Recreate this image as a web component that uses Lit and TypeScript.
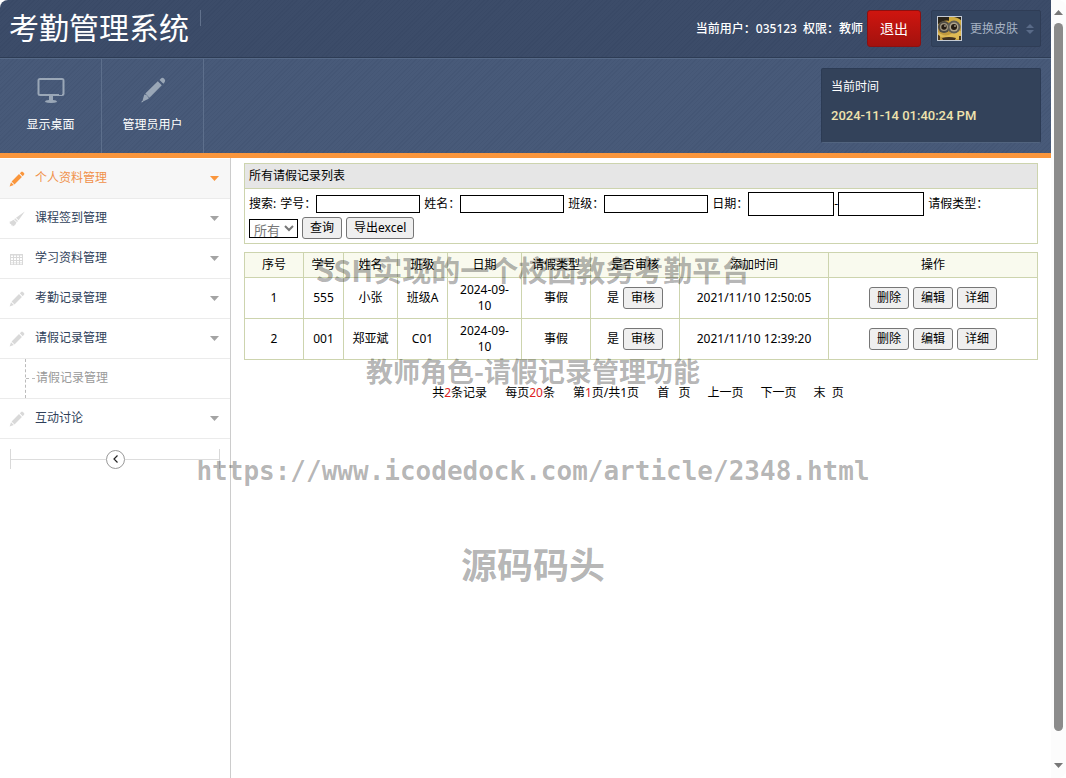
import { LitElement, html, css, svg, nothing } from "lit";
import { customElement, property, state } from "lit/decorators.js";
import { classMap } from "lit/directives/class-map.js";

type IconName = "pencil" | "brush" | "grid";

const icons = {
  pencil: svg`<path d="M10.8 2.3 12.2 .9Q13 .2 13.9 1L15 2.1Q15.8 3 15 3.8L13.700 5.2ZM2.600 10.500 10 3.100 12.900 6 5.500 13.400ZM2 11.200 4.800 14 .6 15.400Z"/>`,
  brush: svg`<path d="M15.800 .4 9.600 9.200 7 6.700ZM6.200 7.300 9 10.100 8 11.100 5.200 8.300ZM4.600 8.700 7.500 11.600Q6.400 15 3.800 15.600L3.500 14.300 2.300 14.400 2.200 13 .8 12.800 .9 11.300 0 11Q2 10.600 4.600 8.700Z"/>`,
  grid: svg`<path fill-rule="evenodd" d="M1 3H14V14H1ZM2 4.500V6H4V4.500ZM5 4.500V6H7V4.500ZM8 4.500V6H10V4.500ZM11 4.500V6H13V4.500ZM2 7V9H4V7ZM5 7V9H7V7ZM8 7V9H10V7ZM11 7V9H13V7ZM2 10V11.500H4V10ZM5 10V11.500H7V10ZM8 10V11.500H10V10ZM11 10V11.500H13V10ZM2 12.300V13.300H4V12.300ZM5 12.300V13.300H7V12.300ZM8 12.300V13.300H10V12.300ZM11 12.300V13.300H13V12.300Z"/>`,
};

const base = css`
  * {
    box-sizing: border-box;
  }
  a {
    color: inherit;
    text-decoration: none;
  }
  button,
  input,
  select {
    font: inherit;
    margin: 0;
  }
  svg {
    display: block;
    flex: none;
  }
`;

@customElement("app-header")
export class AppHeader extends LitElement {
  static styles = [
    base,
    css`
      :host {
        display: block;
        color: #fff;
        border-bottom: 5px solid #fa963c;
      }
      .top,
      .tools {
        display: flex;
        background-image: repeating-linear-gradient(
          135deg,
          rgba(20, 35, 65, 0.07) 0 1px,
          transparent 1px 3px
        );
      }
      .top {
        height: 58px;
        padding: 10px 10px 0 9px;
        background-color: #3c4c69;
        border-bottom: 1px solid #2d3c55;
        border-top-left-radius: 8px;
      }
      h1 {
        margin: 0;
        padding-right: 11px;
        font-size: 30px;
        font-weight: 400;
        line-height: 36px;
      }
      .divider {
        width: 1px;
        height: 16px;
        background: #61718c;
      }
      .user {
        display: flex;
        gap: 6px;
        margin-left: auto;
        padding-right: 4px;
        line-height: 37px;
        font-weight: 500;
      }
      .exit {
        width: 54px;
        height: 37px;
        padding: 0;
        color: #fff;
        font-size: 14px;
        border: 1px solid #8d1010;
        border-radius: 3px;
        background: linear-gradient(#cf150f, #a3120e);
      }
      .skin {
        display: flex;
        align-items: center;
        gap: 8px;
        width: 110px;
        height: 37px;
        margin-left: 10px;
        padding: 0 6px 0 5px;
        color: #a5b1c2;
        border: 1px solid #2f3d56;
        border-radius: 2px;
        background: #344560;
      }
      .updown {
        margin-left: auto;
      }
      .tools {
        height: 95px;
        padding-right: 10px;
        background-color: #485a79;
        border-top: 1px solid #566987;
      }
      .tool {
        display: flex;
        flex-direction: column;
        align-items: center;
        gap: 11px;
        width: 102px;
        padding-top: 17px;
        border-right: 1px solid #5d6f8c;
        line-height: 18px;
      }
      .clock {
        width: 220px;
        height: 75px;
        margin: 9px 0 0 auto;
        padding: 10px 9px;
        border: 1px solid #2c3b54;
        border-radius: 2px;
        border-bottom-color: #52647f;
        background: #33425a;
        line-height: 16px;
      }
      time {
        display: block;
        padding-top: 13px;
        color: #efe3ae;
        font-family: Roboto, sans-serif;
        font-size: 13px;
        font-weight: 500;
      }
    `,
  ];

  render() {
    return html`
      <div class="top">
        <h1>考勤管理系统</h1>
        <span class="divider"></span>
        <div class="user"><span>当前用户：035123</span><span>权限：教师</span></div>
        <button class="exit">退出</button>
        <button class="skin">
          <svg width="25" height="25" viewBox="0 0 25 25" aria-hidden="true">
            <rect width="25" height="25" fill="#c29a3e" />
            <path d="M0 0H25V7Q19 2 13 5 7 3 0 9Z" fill="#2a2419" />
            <path d="M12 1Q19 0 25 5V10L12 7Z" fill="#d0ac40" />
            <path d="M0 15Q7 22 14 18T25 15V22L17 24 0 20Z" fill="#dfba55" />
            <circle cx="7" cy="11" r="6" fill="#4e4b45" />
            <circle cx="17" cy="11" r="6.500" fill="#5f5c55" />
            <circle cx="7" cy="11" r="4" fill="#a1957e" />
            <circle cx="17" cy="11" r="4.500" fill="#b0a48c" />
            <circle cx="7" cy="11" r="2.700" fill="#241b12" />
            <circle cx="17" cy="11" r="3" fill="#241b12" />
            <circle cx="8" cy="10" r=".8" fill="#e8e1d0" />
            <circle cx="18" cy="10" r=".8" fill="#e8e1d0" />
            <path d="M5 22Q12 20 19 22L18 24H6Z" fill="#403020" />
            <path d="M0 18 3 20V25H0ZM22 20H25V25H22Z" fill="#4c3a20" />
            <rect x=".5" y=".5" width="24" height="24" fill="none" stroke="#c4cad3" />
          </svg>
          <span>更换皮肤</span>
          <svg class="updown" width="8" height="10" viewBox="0 0 8 10" aria-hidden="true">
            <path d="M0 4 4 0 8 4ZM0 6H8L4 10Z" fill="#596b88" />
          </svg>
        </button>
      </div>
      <div class="tools">
        <a class="tool" href="#desktop">
          <svg width="28" height="29" viewBox="0 0 28 29" fill="#9aa7b7" aria-hidden="true">
            <path fill-rule="evenodd" d="M3 2H25Q27.500 2 27.500 4.500V18Q27.500 20 25 20H3Q.5 20 .5 18V4.500Q.5 2 3 2ZM2.500 4V18H25.500V4Z" />
            <path d="M12 20H16V24Q20 24 20 26 18 27 14 27T8 26Q8 24 12 24Z" />
            <path d="M22 18H25V19H22Z" fill="#4a5c7b" />
          </svg>
          <span>显示桌面</span>
        </a>
        <a class="tool" href="#admin">
          <svg width="28" height="29" viewBox="0 0 28 29" fill="#9aa7b7" aria-hidden="true">
            <path d="M20.500 4 22 2.400Q23.500 1.200 25 2.600 27 4.400 25.800 6L24.400 7.700ZM18.800 5.300 22.800 9.300 10.500 21.700 6.300 17.500ZM5.300 18.500Q8 18.500 8.400 20.300 9.800 20.500 9.700 22.700L4.500 25.200 3.700 24ZM3.200 24.300 4.500 25.700 2.300 26.600Z" />
          </svg>
          <span>管理员用户</span>
        </a>
        <div class="clock">
          <div>当前时间</div>
          <time datetime="2024-11-14T13:40:24">2024-11-14 01:40:24 PM</time>
        </div>
      </div>
    `;
  }
}

interface MenuItem {
  label: string;
  icon: IconName;
  children?: string[];
}

@customElement("side-menu")
export class SideMenu extends LitElement {
  @state() private active = "个人资料管理";

  private items: MenuItem[] = [
    { label: "个人资料管理", icon: "pencil" },
    { label: "课程签到管理", icon: "brush" },
    { label: "学习资料管理", icon: "grid" },
    { label: "考勤记录管理", icon: "pencil" },
    { label: "请假记录管理", icon: "pencil", children: ["请假记录管理"] },
    { label: "互动讨论", icon: "pencil" },
  ];

  static styles = [
    base,
    css`
      :host {
        display: block;
        flex: none;
        width: 231px;
        padding-top: 1px;
        border-right: 1px solid #ccc;
        background: #fff;
      }
      .item {
        display: flex;
        align-items: center;
        gap: 10px;
        width: 100%;
        height: 40px;
        padding: 0 11px 0 9px;
        border: 0;
        border-bottom: 1px solid #ebebeb;
        background: none;
        color: #2f3f5a;
        text-align: left;
      }
      .item.active {
        background: #f7f7f7;
        color: #f0914a;
      }
      .label {
        padding-bottom: 2px;
      }
      .icon {
        fill: #d9d9d9;
      }
      .arrow {
        margin-left: auto;
        fill: #a3a3a3;
      }
      .active .icon,
      .active .arrow {
        fill: #fa963c;
      }
      .sub {
        display: flex;
        height: 40px;
        padding-left: 25px;
        border-bottom: 1px solid #ebebeb;
        color: #999;
        line-height: 38px;
      }
      .branch {
        display: flex;
        align-items: center;
        width: 11px;
        border-left: 1px dashed #bbb;
      }
      .branch::after {
        content: "";
        width: 9px;
        border-top: 1px dashed #bbb;
      }
      .fold {
        display: flex;
        align-items: center;
        height: 20px;
        margin: 10px;
        border: solid #d9d9d9;
        border-width: 0 1px;
      }
      .line {
        flex: 1;
        height: 1px;
        background: #ddd;
      }
      .toggle {
        display: grid;
        place-items: center;
        width: 19px;
        height: 19px;
        padding: 0;
        border: 1px solid #999;
        border-radius: 50%;
        background: #fff;
      }
    `,
  ];

  render() {
    return html`
      <nav>
        ${this.items.map(
          (item) => html`
            <button
              class=${classMap({ item: true, active: item.label === this.active })}
              @click=${() => (this.active = item.label)}
            >
              <svg class="icon" width="16" height="16" viewBox="0 0 16 16" aria-hidden="true">${icons[item.icon]}</svg>
              <span class="label">${item.label}</span>
              <svg class="arrow" width="9" height="5" viewBox="0 0 9 5" aria-hidden="true"><path d="M0 0H9L4.500 5Z" /></svg>
            </button>
            ${item.children?.map(
              (child) => html`<a class="sub" href="#leave"><span class="branch"></span>${child}</a>`
            ) ?? nothing}
          `
        )}
      </nav>
      <div class="fold">
        <span class="line"></span>
        <button class="toggle" aria-label="收起菜单">
          <svg width="5" height="8" viewBox="0 0 5 8" aria-hidden="true"><path d="M4.500 .5 1 4 4.500 7.500" fill="none" stroke="#222" stroke-width="1.200" /></svg>
        </button>
        <span class="line"></span>
      </div>
    `;
  }
}

@customElement("leave-records")
export class LeaveRecords extends LitElement {
  @property({ attribute: false }) rows = [
    ["1", "555", "小张", "班级A", "2024-09-10", "事假", "是", "2021/11/10 12:50:05"],
    ["2", "001", "郑亚斌", "C01", "2024-09-10", "事假", "是", "2021/11/10 12:39:20"],
  ];

  private columns = ["序号", "学号", "姓名", "班级", "日期", "请假类型", "是否审核", "添加时间", "操作"];

  static styles = [
    base,
    css`
      :host {
        display: block;
        flex: 1;
        min-width: 0;
        padding: 5px 13px;
        color: #000;
      }
      .panel {
        border: 1px solid #cdd4ae;
      }
      h2 {
        margin: 0;
        padding: 0 4px;
        font-size: 12px;
        font-weight: 400;
        line-height: 24px;
        background: #e6e6e6;
        border-bottom: 1px solid #cdd4ae;
      }
      form {
        padding: 3px 4px;
      }
      .row {
        display: flex;
        align-items: center;
        gap: 4px;
        height: 24px;
        white-space: nowrap;
      }
      .field {
        display: flex;
        align-items: center;
      }
      .text {
        width: 104px;
        height: 18px;
        padding: 1px 2px;
        border: 1px solid #000;
        background: #fff;
      }
      .date {
        width: 86px;
        height: 24px;
        padding: 1px 2px;
        border: 1px solid #000;
        background: #fff;
      }
      .type {
        width: 49px;
        height: 19px;
        padding: 0;
        border: 1px solid #000;
        background: #fff;
        color: #777;
        font-size: 13px;
        line-height: 16px;
      }
      .btn {
        height: 22px;
        padding: 0 7px;
        border: 1px solid #767676;
        border-radius: 3px;
        background: #efefef;
        color: #000;
        line-height: 18px;
      }
      table {
        width: 100%;
        margin-top: 8px;
        table-layout: fixed;
        border-collapse: collapse;
        text-align: center;
        line-height: 16px;
      }
      th,
      td {
        padding: 0 8px;
        border: 1px solid #cdd4ae;
      }
      th {
        height: 25px;
        padding: 0;
        font-weight: 400;
        background: #f9faee;
      }
      td {
        height: 41px;
      }
      .tight {
        padding: 0;
      }
      .c0 { width: 59px; }
      .c1 { width: 40px; }
      .c2 { width: 54px; }
      .c3 { width: 50px; }
      .c4 { width: 74px; }
      .c5 { width: 69px; }
      .c6 { width: 89px; }
      .c7 { width: 149px; }
      .actions {
        display: flex;
        align-items: center;
        justify-content: center;
        gap: 4px;
      }
      .pager {
        display: flex;
        justify-content: center;
        gap: 18px;
        padding: 24px 6px 0 0;
        line-height: 18px;
        white-space: pre;
      }
      b {
        color: #d22;
        font-weight: 400;
      }
      .links {
        display: flex;
        gap: 17px;
      }
    `,
  ];

  render() {
    return html`
      <section class="panel">
        <h2>所有请假记录列表</h2>
        <form @submit=${(e: Event) => e.preventDefault()}>
          <div class="row">
            <span>搜索:</span>
            <label class="field">学号：<input class="text" type="text" /></label>
            <label class="field">姓名：<input class="text" type="text" /></label>
            <label class="field">班级：<input class="text" type="text" /></label>
            <div class="field">
              <label for="from">日期：</label><input class="date" id="from" type="text" />
              <label for="to">-</label><input class="date" id="to" type="text" />
            </div>
            <label for="type">请假类型：</label>
          </div>
          <div class="row">
            <select class="type" id="type"><option>所有</option></select>
            <button class="btn">查询</button>
            <button class="btn" type="button">导出excel</button>
          </div>
        </form>
      </section>
      <table>
        <thead>
          <tr>${this.columns.map((c, i) => html`<th class="c${i}" scope="col">${c}</th>`)}</tr>
        </thead>
        <tbody>
          ${this.rows.map(
            (r) => html`<tr>
              ${r.map((v, i) =>
                i === 6
                  ? html`<td class="tight"><div class="actions">${v}<button class="btn">审核</button></div></td>`
                  : html`<td class=${i === 4 ? "" : "tight"}>${v}</td>`
              )}
              <td>
                <div class="actions">
                  <button class="btn">删除</button>
                  <button class="btn">编辑</button>
                  <button class="btn">详细</button>
                </div>
              </td>
            </tr>`
          )}
        </tbody>
      </table>
      <div class="pager">
        <span>共<b>2</b>条记录</span><span>每页<b>20</b>条</span><span>第<b>1</b>页/共1页</span>
        <nav class="links"><a href="#first">首   页</a><a href="#prev">上一页</a><a href="#next">下一页</a><a href="#last">末  页</a></nav>
      </div>
    `;
  }
}

@customElement("app-root")
export class AppRoot extends LitElement {
  static styles = [
    base,
    css`
      :host {
        display: flex;
        position: relative;
        height: 100vh;
        overflow: hidden;
        background: #fff;
        font: 12px/18px "Noto Sans", "Noto Sans CJK SC", sans-serif;
      }
      .page {
        display: flex;
        flex-direction: column;
        flex: 1;
        min-width: 0;
      }
      .body {
        display: flex;
        flex: 1;
      }
      .scroll {
        display: flex;
        flex-direction: column;
        align-items: center;
        gap: 7px;
        width: 15px;
        padding: 10px 0;
        background: #fcfcfc;
        border-radius: 0 8px 8px 0;
      }
      .track {
        flex: 1;
        padding-bottom: 24px;
        display: flex;
      }
      .thumb {
        width: 9px;
        border-radius: 5px;
        background: #8b8b8b;
      }
      .marks {
        position: absolute;
        inset: 0;
        text-align: center;
        white-space: nowrap;
        font-weight: 700;
        font-family: "Noto Sans CJK SC", sans-serif;
        color: rgba(0, 0, 0, 0.3);
        pointer-events: none;
      }
      .mark {
        position: absolute;
        left: 0;
        right: 0;
        line-height: 40px;
      }
      .title {
        top: 249px;
        font-size: 29px;
      }
      .role {
        top: 351px;
        font-size: 27px;
      }
      .site {
        top: 451px;
        font-size: 26px;
        font-family: "DejaVu Sans Mono", monospace;
      }
      .brand {
        top: 543px;
        font-size: 36px;
      }
    `,
  ];

  render() {
    return html`
      <div class="page">
        <app-header></app-header>
        <div class="body">
          <side-menu></side-menu>
          <leave-records></leave-records>
        </div>
      </div>
      <div class="scroll" aria-hidden="true">
        <svg width="9" height="6" viewBox="0 0 9 6"><path d="M0 5 4.500 0 9 5Z" fill="#777" /></svg>
        <div class="track"><div class="thumb"></div></div>
        <svg width="9" height="6" viewBox="0 0 9 6"><path d="M0 1H9L4.500 6Z" fill="#777" /></svg>
      </div>
      <div class="marks">
        <div class="mark title">SSH实现的一个校园教务考勤平台</div>
        <div class="mark role">教师角色-请假记录管理功能</div>
        <div class="mark site">https://www.icodedock.com/article/2348.html</div>
        <div class="mark brand">源码码头</div>
      </div>
    `;
  }
}
